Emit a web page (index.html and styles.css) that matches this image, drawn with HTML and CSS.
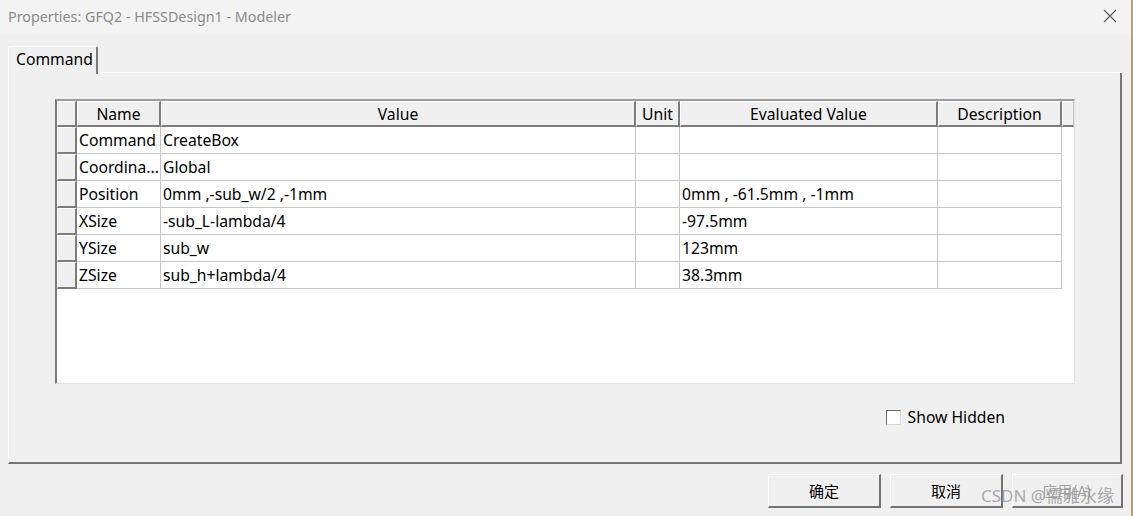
FILE: index.html
```html
<!DOCTYPE html>
<html>
<head>
<meta charset="utf-8">
<link rel="stylesheet" href="styles.css">
</head>
<body>
<div class="window">
  <div class="titlebar">
    <span class="title">Properties: GFQ2 - HFSSDesign1 - Modeler</span>
    <svg class="close" width="14" height="14" viewBox="0 0 14 14"><path d="M1 1 L13 13 M13 1 L1 13" stroke="#5a5a5a" stroke-width="1.1" fill="none"/></svg>
  </div>
  <div class="main">
    <div class="tabs"><div class="tab">Command</div><div class="tab-rest"></div></div>
    <div class="panel">
      <div class="grid-frame">
        <div class="grid">
          <div class="hc"></div>
          <div class="hc">Name</div>
          <div class="hc">Value</div>
          <div class="hc">Unit</div>
          <div class="hc">Evaluated Value</div>
          <div class="hc">Description</div>
          <div class="hc hc-end"></div>

          <div class="rh"></div><div class="dc">Command</div><div class="dc">CreateBox</div><div class="dc"></div><div class="dc"></div><div class="dc"></div><div class="ec"></div>
          <div class="rh"></div><div class="dc">Coordina...</div><div class="dc">Global</div><div class="dc"></div><div class="dc"></div><div class="dc"></div><div class="ec"></div>
          <div class="rh"></div><div class="dc">Position</div><div class="dc">0mm ,-sub_w/2 ,-1mm</div><div class="dc"></div><div class="dc">0mm , -61.5mm , -1mm</div><div class="dc"></div><div class="ec"></div>
          <div class="rh"></div><div class="dc">XSize</div><div class="dc">-sub_L-lambda/4</div><div class="dc"></div><div class="dc">-97.5mm</div><div class="dc"></div><div class="ec"></div>
          <div class="rh"></div><div class="dc">YSize</div><div class="dc">sub_w</div><div class="dc"></div><div class="dc">123mm</div><div class="dc"></div><div class="ec"></div>
          <div class="rh"></div><div class="dc">ZSize</div><div class="dc">sub_h+lambda/4</div><div class="dc"></div><div class="dc">38.3mm</div><div class="dc"></div><div class="ec"></div>
        </div>
      </div>
      <div class="options">
        <label class="check"><span class="box"></span><span>Show Hidden</span></label>
      </div>
    </div>
    <div class="buttons">
      <div class="btn">确定</div>
      <div class="btn">取消</div>
      <div class="btn btn-last disabled">应用(A)</div>
    </div>
  </div>
  <div class="watermark">CSDN @儒雅永缘</div>
</div>
</body>
</html>
```

FILE: styles.css
```css
html, body {
  margin: 0;
  padding: 0;
}
body {
  width: 1133px;
  height: 516px;
  overflow: hidden;
  background: #f0f0f0;
  font-family: "Noto Sans", "Noto Sans CJK SC", sans-serif;
  font-size: 15.7px;
  color: #000;
}
.window {
  position: relative;
  width: 1133px;
  height: 516px;
  box-sizing: border-box;
  border-right: 2px solid #b9a16a;
  display: flex;
  flex-direction: column;
}
.titlebar {
  height: 35px;
  background: #f3f3f3;
  display: flex;
  align-items: center;
  padding-left: 8px;
  padding-right: 14px;
  flex: none;
}
.title {
  flex: 1;
  color: #8c8c8c;
  font-size: 14.3px;
  padding-bottom: 3px;
}
.close {
  margin-bottom: 3px;
}
.main {
  padding: 11px 9px 0 8px;
  display: flex;
  flex-direction: column;
}
.tabs {
  display: flex;
  height: 27px;
}
.tab {
  box-sizing: border-box;
  width: 90px;
  height: 28px;
  border-left: 1px solid #fff;
  border-top: 1px solid #fff;
  border-right: 2px solid #7a7a7a;
  border-top-left-radius: 2px;
  border-top-right-radius: 2px;
  padding-left: 7px;
  padding-top: 1px;
  line-height: 22px;
  background: #f0f0f0;
  position: relative;
  z-index: 1;
}
.tab-rest {
  flex: 1;
  border-bottom: 1px solid #fff;
}
.panel {
  box-sizing: border-box;
  height: 391px;
  border-left: 1px solid #fff;
  border-right: 2px solid #777;
  border-bottom: 2px solid #777;
  padding: 26px 0 0 46px;
}
.grid-frame {
  box-sizing: border-box;
  width: 1020px;
  height: 285px;
  border-left: 2px solid #7b7b7b;
  border-top: 2px solid #9c9c9c;
  border-right: 1px solid #e3e3e3;
  border-bottom: 1px solid #e3e3e3;
  background: #fff;
}
.grid {
  display: grid;
  grid-template-columns: 20px 84px 475px 44px 258px 124px 12px;
  grid-template-rows: 26px;
  grid-auto-rows: 27px;
}
.hc, .rh {
  box-sizing: border-box;
  background: #f0f0f0;
  border-top: 1px solid #fff;
  border-left: 1px solid #fff;
  border-right: 2px solid #7c7c7c;
  border-bottom: 2px solid #7c7c7c;
  display: flex;
  align-items: center;
  justify-content: center;
  white-space: nowrap;
  overflow: hidden;
}
.hc-end {
  border-right: 1px solid #c8c8c8;
}
.dc {
  box-sizing: border-box;
  background: #fff;
  border-right: 1px solid #c6c6c6;
  border-bottom: 1px solid #c6c6c6;
  display: flex;
  align-items: center;
  padding-left: 2px;
  white-space: nowrap;
  overflow: hidden;
}
.ec {
  background: #fff;
}
.options {
  display: flex;
  justify-content: flex-end;
  padding-right: 115px;
  margin-top: 22px;
}
.check {
  display: flex;
  align-items: center;
  gap: 7px;
}
.box {
  box-sizing: border-box;
  width: 15px;
  height: 15px;
  background: #fff;
  border-top: 1px solid #6a6a6a;
  border-left: 1px solid #6a6a6a;
  border-right: 1px solid #d8d8d8;
  border-bottom: 1px solid #d8d8d8;
}
.buttons {
  display: flex;
  justify-content: flex-end;
  gap: 9px;
  margin-top: 10px;
  margin-right: -1px;
}
.btn {
  box-sizing: border-box;
  width: 113px;
  height: 34px;
  background: #f0f0f0;
  border-top: 1px solid #fff;
  border-left: 1px solid #fff;
  border-right: 2px solid #737373;
  border-bottom: 2px solid #737373;
  display: flex;
  align-items: center;
  justify-content: center;
  font-family: "Noto Sans CJK SC", sans-serif;
  font-size: 15px;
}
.btn-last {
  width: 111px;
}
.btn.disabled {
  color: #a0a0a0;
  text-shadow: 1px 1px 0 #fff;
}
.watermark {
  position: absolute;
  left: 981px;
  top: 484px;
  font-family: "Noto Sans", "Noto Sans CJK SC", sans-serif;
  font-size: 17px;
  line-height: 24px;
  color: rgba(150, 150, 150, 0.8);
  white-space: nowrap;
}
```
